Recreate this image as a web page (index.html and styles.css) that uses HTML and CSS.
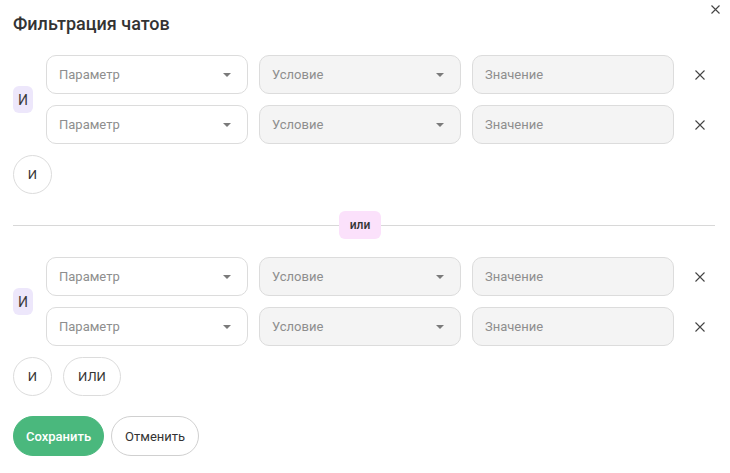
FILE: index.html
```html
<!DOCTYPE html>
<html lang="ru">
<head>
<meta charset="utf-8">
<title>Фильтрация чатов</title>
<link rel="stylesheet" href="styles.css">
</head>
<body>
<div class="modal">
  <button class="close-top" aria-label="Закрыть">
    <svg width="9" height="9" viewBox="0 0 9 9"><path d="M0.5 0.5L8.5 8.5M8.5 0.5L0.5 8.5" stroke="#444" stroke-width="1.1" fill="none"/></svg>
  </button>
  <h1 class="title">Фильтрация чатов</h1>

  <div class="group">
    <div class="op-badge">И</div>
    <div class="rows">
      <div class="row">
        <div class="field select">Параметр<span class="arrow"></span></div>
        <div class="field select disabled">Условие<span class="arrow"></span></div>
        <div class="field disabled">Значение</div>
        <button class="remove" aria-label="Удалить"><svg width="10" height="10" viewBox="0 0 10 10"><path d="M0.5 0.5L9.5 9.5M9.5 0.5L0.5 9.5" stroke="#444" stroke-width="1.1" fill="none"/></svg></button>
      </div>
      <div class="row">
        <div class="field select">Параметр<span class="arrow"></span></div>
        <div class="field select disabled">Условие<span class="arrow"></span></div>
        <div class="field disabled">Значение</div>
        <button class="remove" aria-label="Удалить"><svg width="10" height="10" viewBox="0 0 10 10"><path d="M0.5 0.5L9.5 9.5M9.5 0.5L0.5 9.5" stroke="#444" stroke-width="1.1" fill="none"/></svg></button>
      </div>
    </div>
  </div>
  <div class="add-row">
    <button class="pill round">И</button>
  </div>

  <div class="divider">
    <span class="line left"></span>
    <span class="or-badge">или</span>
    <span class="line right"></span>
  </div>

  <div class="group">
    <div class="op-badge">И</div>
    <div class="rows">
      <div class="row">
        <div class="field select">Параметр<span class="arrow"></span></div>
        <div class="field select disabled">Условие<span class="arrow"></span></div>
        <div class="field disabled">Значение</div>
        <button class="remove" aria-label="Удалить"><svg width="10" height="10" viewBox="0 0 10 10"><path d="M0.5 0.5L9.5 9.5M9.5 0.5L0.5 9.5" stroke="#444" stroke-width="1.1" fill="none"/></svg></button>
      </div>
      <div class="row">
        <div class="field select">Параметр<span class="arrow"></span></div>
        <div class="field select disabled">Условие<span class="arrow"></span></div>
        <div class="field disabled">Значение</div>
        <button class="remove" aria-label="Удалить"><svg width="10" height="10" viewBox="0 0 10 10"><path d="M0.5 0.5L9.5 9.5M9.5 0.5L0.5 9.5" stroke="#444" stroke-width="1.1" fill="none"/></svg></button>
      </div>
    </div>
  </div>
  <div class="add-row">
    <button class="pill round">И</button>
    <button class="pill">ИЛИ</button>
  </div>

  <div class="actions">
    <button class="btn primary">Сохранить</button>
    <button class="btn secondary">Отменить</button>
  </div>
</div>
</body>
</html>
```

FILE: styles.css
```css
* { box-sizing: border-box; }
html, body {
  margin: 0;
  padding: 0;
  background: #fff;
  font-family: Roboto, "Noto Sans", "DejaVu Sans", sans-serif;
  color: #333;
}
button {
  font-family: inherit;
  cursor: pointer;
}
.modal {
  position: relative;
  width: 730px;
  height: 473px;
  padding: 12px 15px 0 13px;
}
.close-top {
  position: absolute;
  top: 5px;
  right: 10px;
  width: 9px;
  height: 9px;
  padding: 0;
  border: 0;
  background: none;
  display: flex;
}
.title {
  margin: 0;
  font-size: 18px;
  line-height: 24px;
  font-weight: 500;
  color: #333;
}
.group {
  display: flex;
  align-items: center;
  margin-top: 19px;
}
.op-badge {
  width: 20px;
  height: 27px;
  border-radius: 6px;
  background: #ede7fb;
  color: #3a3a3a;
  font-size: 14px;
  display: flex;
  align-items: center;
  justify-content: center;
  margin-right: 13px;
}
.rows {
  display: flex;
  flex-direction: column;
  gap: 11px;
}
.row {
  display: flex;
  align-items: center;
  gap: 11px;
}
.field {
  position: relative;
  width: 202px;
  height: 39px;
  border: 1px solid #dcdcdc;
  border-radius: 10px;
  background: #fff;
  padding: 0 12px;
  display: flex;
  align-items: center;
  font-size: 13px;
  color: #8e8e8e;
}
.field.disabled {
  background: #f4f4f4;
}
.arrow {
  position: absolute;
  right: 16px;
  top: 50%;
  margin-top: -2px;
  width: 0;
  height: 0;
  border-left: 4px solid transparent;
  border-right: 4px solid transparent;
  border-top: 4px solid #7a7a7a;
}
.remove {
  width: 10px;
  height: 10px;
  padding: 0;
  border: 0;
  background: none;
  display: flex;
  margin-left: 10px;
}
.add-row {
  display: flex;
  gap: 11px;
  margin-top: 11px;
}
.pill {
  height: 39px;
  border: 1px solid #dcdcdc;
  border-radius: 20px;
  background: #fff;
  padding: 0 14px;
  font-size: 13px;
  color: #333;
}
.pill.round {
  width: 39px;
  padding: 0;
}
.divider {
  display: flex;
  align-items: center;
  margin-top: 17px;
  margin-bottom: -1px;
}
.line {
  height: 1px;
  background: #d8d8d8;
}
.line.left { flex: 326 1 0; }
.line.right { flex: 334 1 0; }
.or-badge {
  width: 42px;
  height: 28px;
  border-radius: 6px;
  background: #fbe1fb;
  color: #333;
  font-size: 12px;
  font-weight: 500;
  display: flex;
  align-items: center;
  justify-content: center;
}
.actions {
  display: flex;
  gap: 7px;
  margin-top: 20px;
}
.btn {
  height: 40px;
  border-radius: 20px;
  font-size: 13px;
  padding: 0 12px;
}
.btn.primary {
  background: #4ab87d;
  border: 1px solid #4ab87d;
  color: #fff;
  font-weight: 500;
}
.btn.secondary {
  background: #fff;
  border: 1px solid #d0d0d0;
  color: #333;
  padding: 0 13px;
}
```
